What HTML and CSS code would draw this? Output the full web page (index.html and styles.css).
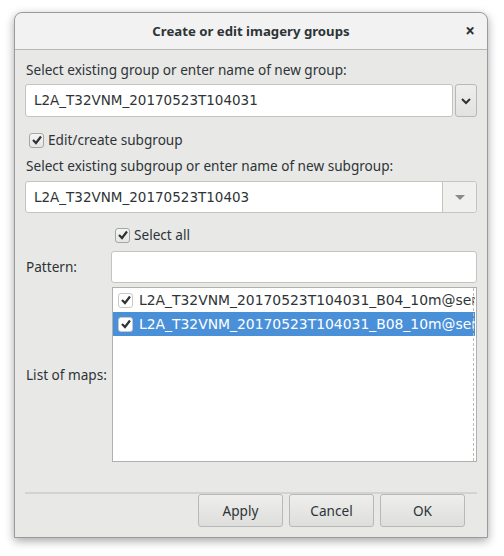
FILE: index.html
```html
<!DOCTYPE html>
<html>
<head>
<meta charset="utf-8">
<link rel="stylesheet" href="styles.css">
</head>
<body>
<div class="window">
  <div class="titlebar">
    <span class="title">Create or edit imagery groups</span>
    <span class="close">×</span>
  </div>
  <div class="content">
    <div class="label l1">Select existing group or enter name of new group:</div>
    <div class="combo">
      <div class="entry">L2A_T32VNM_20170523T104031</div>
      <div class="dropbtn">
        <svg width="12" height="8" viewBox="0 0 12 8"><path d="M2 2 L6 6 L10 2" fill="none" stroke="#2e3436" stroke-width="2"/></svg>
      </div>
    </div>
    <label class="check c1"><span class="box"><svg width="12" height="12" viewBox="0 0 12 12"><path d="M2 6 L5 9 L10 2.5" fill="none" stroke="#2e3436" stroke-width="2.2"/></svg></span>Edit/create subgroup</label>
    <div class="label l2">Select existing subgroup or enter name of new subgroup:</div>
    <div class="combo2">
      <div class="entry2">L2A_T32VNM_20170523T10403</div>
      <div class="arrowbtn"><span class="tri"></span></div>
    </div>
    <div class="grid">
      <label class="check c2"><span class="box"><svg width="12" height="12" viewBox="0 0 12 12"><path d="M2 6 L5 9 L10 2.5" fill="none" stroke="#2e3436" stroke-width="2.2"/></svg></span>Select all</label>
      <div class="label glabel plabel">Pattern:</div>
      <div class="pattern"></div>
      <div class="label glabel">List of maps:</div>
      <div class="list">
        <div class="row"><span class="box sm"><svg width="12" height="12" viewBox="0 0 12 12"><path d="M2 6 L5 9 L10 2.5" fill="none" stroke="#2e3436" stroke-width="2.2"/></svg></span><span class="rtext">L2A_T32VNM_20170523T104031_B04_10m@sentinel</span></div>
        <div class="row sel"><span class="box sm"><svg width="12" height="12" viewBox="0 0 12 12"><path d="M2 6 L5 9 L10 2.5" fill="none" stroke="#2e3436" stroke-width="2.2"/></svg></span><span class="rtext">L2A_T32VNM_20170523T104031_B08_10m@sentinel</span></div>
        <div class="dash"></div>
      </div>
    </div>
    <div class="sep"></div>
    <div class="buttons">
      <div class="btn">Apply</div>
      <div class="btn">Cancel</div>
      <div class="btn">OK</div>
    </div>
  </div>
</div>
</body>
</html>
```
FILE: styles.css
```css
html, body {
  margin: 0;
  padding: 0;
  background: #ffffff;
}
body {
  width: 504px;
  height: 556px;
  overflow: hidden;
  font-family: "Noto Sans", "DejaVu Sans", sans-serif;
  font-size: 13.6px;
  color: #2e3436;
}
.window {
  margin: 12px 0 0 14px;
  width: 472px;
  height: 524px;
  border: 1px solid #9a9a9a;
  border-radius: 8px 8px 0 0;
  background: #e8e8e7;
  box-shadow: 0 3px 10px rgba(0,0,0,0.35);
  display: flex;
  flex-direction: column;
  overflow: hidden;
}
.titlebar {
  height: 36px;
  flex: none;
  border-bottom: 1px solid #b8b8b6;
  background: #f2f2f2;
  display: flex;
  align-items: center;
  justify-content: center;
  position: relative;
  border-radius: 8px 8px 0 0;
}
.title {
  font-weight: bold;
  font-size: 13.2px;
  color: #2e3436;
}
.close {
  position: absolute;
  right: 12px;
  top: 8px;
  font-size: 17px;
  font-weight: bold;
  line-height: 20px;
  color: #2e3436;
}
.content {
  padding: 0 10px;
  display: flex;
  flex-direction: column;
  flex: 1;
}
.label {
  line-height: 18px;
  white-space: nowrap;
}
.entry, .entry2 {
  font-family: "DejaVu Sans", sans-serif;
  font-size: 13.5px;
}
.rtext {
  font-family: "DejaVu Sans", sans-serif;
  font-size: 13.9px;
}
.l1 { margin-top: 11px; padding-left: 1px; }
.combo {
  margin-top: 5px;
  display: flex;
  height: 33px;
}
.entry {
  flex: 1;
  box-sizing: border-box;
  background: #fff;
  border: 1px solid #c4c4c2;
  border-radius: 3px;
  padding-left: 8px;
  line-height: 31px;
}
.dropbtn {
  width: 22px;
  margin-left: 2px;
  box-sizing: border-box;
  border: 1px solid #b8b8b6;
  border-radius: 3px;
  background: linear-gradient(#eeeeed, #e2e2e0);
  display: flex;
  align-items: center;
  justify-content: center;
}
.check {
  display: flex;
  align-items: center;
  line-height: 20px;
  white-space: nowrap;
}
.box {
  width: 13px;
  height: 13px;
  border: 1px solid #a6a6a4;
  border-radius: 3px;
  background: linear-gradient(#f4f4f4, #e6e6e5);
  display: flex;
  align-items: center;
  justify-content: center;
  margin-right: 4px;
  flex: none;
}
.c1 { margin-top: 13px; padding-left: 4px; height: 20px; }
.l2 { margin-top: 7px; padding-left: 1px; }
.combo2 {
  margin-top: 6px;
  display: flex;
  height: 32px;
  box-sizing: border-box;
  border: 1px solid #c4c4c2;
  border-radius: 3px;
  background: #fff;
}
.entry2 {
  flex: 1;
  padding-left: 8px;
  line-height: 30px;
}
.arrowbtn {
  width: 33px;
  border-left: 1px solid #c4c4c2;
  background: #f0f0ef;
  border-radius: 0 3px 3px 0;
  display: flex;
  align-items: center;
  justify-content: center;
}
.tri {
  width: 0;
  height: 0;
  border-left: 5px solid transparent;
  border-right: 5px solid transparent;
  border-top: 5px solid #8a8a8a;
}
.grid {
  display: grid;
  grid-template-columns: 86px 1fr;
  grid-template-rows: 20px 34px 175px;
  row-gap: 4px;
  margin-top: 12px;
}
.c2 { grid-column: 2; padding-left: 4px; }
.glabel {
  align-self: center;
  padding-left: 1px;
}
.plabel {
  margin-top: 2px;
}
.pattern {
  background: #fff;
  border: 1px solid #c4c4c2;
  border-radius: 3px;
  box-sizing: border-box;
  margin-top: 2px;
}
.list {
  background: #fff;
  border: 1px solid #b0b0ae;
  box-sizing: border-box;
  margin-left: 1px;
  overflow: hidden;
  position: relative;
}
.row {
  height: 24px;
  display: flex;
  align-items: center;
  padding-left: 5px;
  white-space: nowrap;
  margin-right: 1px;
  overflow: hidden;
}
.row.sel {
  background: #4a90d9;
  color: #fff;
}
.box.sm {
  background: #fff;
  border-color: #c8c8c8;
  margin-right: 6px;
}
.dash {
  position: absolute;
  right: 2px;
  top: 0;
  bottom: 0;
  border-right: 1px dashed #bcbcbc;
}
.sep {
  margin-top: 30px;
  height: 2px;
  background: #d3d3d2;
}
.buttons {
  display: flex;
  justify-content: flex-end;
  gap: 6px;
  padding-right: 12px;
}
.btn {
  width: 85px;
  height: 33px;
  box-sizing: border-box;
  border: 1px solid #b8b8b6;
  border-radius: 3px;
  background: linear-gradient(#eeeeed, #dededc);
  display: flex;
  align-items: center;
  justify-content: center;
}
```
